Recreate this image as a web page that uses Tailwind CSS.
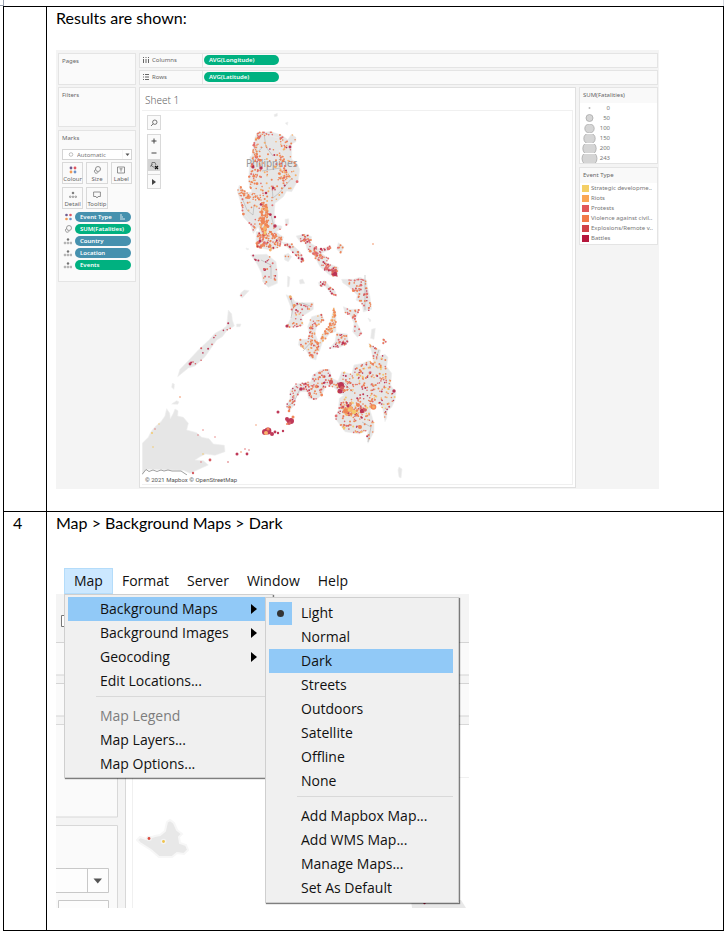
<!DOCTYPE html>
<html lang="en">
<head>
<meta charset="utf-8">
<title>Background maps</title>
<script src="https://cdn.jsdelivr.net/npm/@tailwindcss/browser@4"></script>
</head>
<body class="bg-white text-black font-['Lato',sans-serif]">
<div class="flex justify-between pr-[3px]" aria-hidden="true">
  <div class="w-[4px] h-[6px] border-r border-b border-gray-400"></div>
  <div class="w-[2px] h-[6px] border-l border-gray-300"></div>
</div>
<main class="pl-[3px] pr-[4px]">
<table class="w-full table-fixed border-separate border-spacing-0 border-t border-l border-black text-[16px] leading-[22px]">
<colgroup><col class="w-[43px]"><col></colgroup>
<tbody>
<tr class="align-top">
  <td class="border-r border-b border-black"></td>
  <td class="border-r border-b border-black pl-[9px] pb-[22px]">
    <p>Results are shown:</p>
    <section class="mt-[21px] w-full max-w-[603px] bg-[#f4f4f4] px-[2px] pt-[3px] pb-px pr-[1px] flex gap-[3px] font-['Noto_Sans',sans-serif] text-[6px] leading-[8px] text-[#666]" aria-label="Worksheet">
      <div class="w-[78px] shrink-0 flex flex-col gap-[2px]">
        <div class="h-[32px] border border-[#e4e4e4] bg-[#fafafa] px-[3px] py-[3px]">Pages</div>
        <div class="h-[40px] border border-[#e4e4e4] bg-[#fafafa] px-[3px] py-[3px]">Filters</div>
        <div class="mt-[1px] border border-[#e4e4e4] bg-[#fafafa] px-[3px] pt-[3px] pb-[11px]">
          <label for="mk" class="block">Marks</label>
          <div class="relative mt-[7px]">
            <select id="mk" class="block w-full h-[11px] appearance-none border border-[#d4d4d4] bg-white pl-[14px] text-[6px] leading-[8px] text-[#777]"><option>Automatic</option></select>
            <svg class="absolute inset-0 w-full h-full pointer-events-none" viewBox="0 0 70 11" aria-hidden="true"><circle cx="9" cy="5.5" r="1.8" fill="none" stroke="#999" stroke-width=".6"/><path d="M60.500 1V10" stroke="#eee" stroke-width=".6"/><path d="M63.500 4.500h4l-2 2.500z" fill="#555"/></svg>
          </div>
          <div class="mt-[2px] grid grid-cols-3 gap-x-[3px] gap-y-[3px]">
            <button class="h-[22px] border border-[#d9d9d9] flex flex-col items-center justify-between pt-[3px]"><svg width="8" height="8" viewBox="0 0 8 8"><circle cx="2" cy="2" r="1.400" fill="#6f5a8e"/><circle cx="6" cy="2" r="1.400" fill="#e05560"/><circle cx="2" cy="6" r="1.400" fill="#f29a55"/><circle cx="6" cy="6" r="1.400" fill="#6d93c9"/></svg>Colour</button>
            <button class="h-[22px] border border-[#d9d9d9] flex flex-col items-center justify-between pt-[3px]"><svg width="8" height="8" viewBox="0 0 8 8" fill="none" stroke="#777" stroke-width=".8"><circle cx="5" cy="3" r="2.500"/><path d="M2.500 3.500A2 2 0 1 0 5.200 6.200"/></svg>Size</button>
            <button class="h-[22px] border border-[#d9d9d9] flex flex-col items-center justify-between pt-[3px]"><svg width="8" height="8" viewBox="0 0 8 8" fill="none" stroke="#777" stroke-width=".8"><path d="M.5 1h7v6h-7zM2.500 2.800h3M4 2.800v2.800"/></svg>Label</button>
            <button class="h-[22px] border border-[#d9d9d9] flex flex-col items-center justify-between pt-[3px]"><svg width="8" height="8" viewBox="0 0 8 8" fill="none" stroke="#777" stroke-width=".7"><circle cx="4" cy="2" r=".9" fill="#555"/><circle cx="1.200" cy="5.800" r=".8"/><circle cx="4" cy="5.800" r=".8"/><circle cx="6.800" cy="5.800" r=".8"/></svg>Detail</button>
            <button class="h-[22px] border border-[#d9d9d9] flex flex-col items-center justify-between pt-[3px]"><svg width="8" height="8" viewBox="0 0 8 8" fill="none" stroke="#777" stroke-width=".8"><path d="M.6 1h6.800v4.500H5L4 7 3 5.500H.6z"/></svg>Tooltip</button>
          </div>
          <ul class="mt-[3px] flex flex-col gap-[2px] font-semibold text-white">
            <li class="flex items-center gap-[3px]"><svg class="w-[10px] h-[8px] shrink-0" viewBox="0 0 10 8"><circle cx="4.500" cy="2" r="1.300" fill="#6f5a8e"/><circle cx="8.500" cy="2" r="1.300" fill="#e05560"/><circle cx="4.500" cy="6" r="1.300" fill="#f29a55"/><circle cx="8.500" cy="6" r="1.300" fill="#6d93c9"/></svg><button class="w-[56px] h-[10px] rounded-full bg-[#4691ae] px-[5px] flex items-center justify-between">Event Type<svg width="7" height="6" viewBox="0 0 7 6" fill="none" stroke="#fff" stroke-width=".8"><path d="M1 1h2M1 3h3M1 5h5"/></svg></button></li>
            <li class="flex items-center gap-[3px]"><svg class="w-[10px] h-[8px] shrink-0" viewBox="0 0 10 8" fill="none" stroke="#777" stroke-width=".7"><circle cx="7" cy="3" r="2.500"/><path d="M4.500 3.500A2 2 0 1 0 7.200 6.200"/></svg><button class="w-[56px] h-[10px] rounded-full bg-[#00b180] px-[5px] text-left">SUM(Fatalities)</button></li>
            <li class="flex items-center gap-[3px]"><svg class="w-[10px] h-[8px] shrink-0" viewBox="0 0 10 8" fill="none" stroke="#777" stroke-width=".6"><circle cx="6" cy="2.500" r=".9" fill="#555"/><circle cx="3" cy="6" r=".9"/><circle cx="6" cy="6" r=".9"/><circle cx="9" cy="6" r=".9"/></svg><button class="w-[56px] h-[10px] rounded-full bg-[#4691ae] px-[5px] text-left">Country</button></li>
            <li class="flex items-center gap-[3px]"><svg class="w-[10px] h-[8px] shrink-0" viewBox="0 0 10 8" fill="none" stroke="#777" stroke-width=".6"><circle cx="6" cy="2.500" r=".9" fill="#555"/><circle cx="3" cy="6" r=".9"/><circle cx="6" cy="6" r=".9"/><circle cx="9" cy="6" r=".9"/></svg><button class="w-[56px] h-[10px] rounded-full bg-[#4691ae] px-[5px] text-left">Location</button></li>
            <li class="flex items-center gap-[3px]"><svg class="w-[10px] h-[8px] shrink-0" viewBox="0 0 10 8" fill="none" stroke="#777" stroke-width=".6"><circle cx="6" cy="2.500" r=".9" fill="#555"/><circle cx="3" cy="6" r=".9"/><circle cx="6" cy="6" r=".9"/><circle cx="9" cy="6" r=".9"/></svg><button class="w-[56px] h-[10px] rounded-full bg-[#00b180] px-[5px] text-left">Events</button></li>
          </ul>
        </div>
      </div>
      <div class="flex-1 min-w-0 flex flex-col gap-[2px]">
        <div class="h-[15px] border border-[#e4e4e4] bg-[#fafafa] flex items-start">
          <div class="w-[63px] h-full border-r border-[#e4e4e4] pl-[3px] pb-[1px] flex items-center gap-[3px]"><svg width="6" height="6" viewBox="0 0 6 6" fill="#666"><path d="M0 0h1v1H0zM0 2h1v4H0zM2.500 0h1v1h-1zM2.500 2h1v4h-1zM5 0h1v1H5zM5 2h1v4H5z"/></svg>Columns</div>
          <button class="ml-[1px] mt-[1px] w-[75px] h-[10px] rounded-full bg-[#00b180] text-white font-semibold text-left pl-[5px]">AVG(Longitude)</button>
        </div>
        <div class="h-[15px] border border-[#e4e4e4] bg-[#fafafa] flex items-start">
          <div class="w-[63px] h-full border-r border-[#e4e4e4] pl-[3px] pb-[1px] flex items-center gap-[3px]"><svg width="6" height="6" viewBox="0 0 6 6" fill="#666"><path d="M0 0h1v1H0zM2 0h4v1H2zM0 2.500h1v1H0zM2 2.500h4v1H2zM0 5h1v1H0zM2 5h4v1H2z"/></svg>Rows</div>
          <button class="ml-[1px] mt-[1px] w-[75px] h-[10px] rounded-full bg-[#00b180] text-white font-semibold text-left pl-[5px]">AVG(Latitude)</button>
        </div>
        <div class="flex items-start gap-[3px]">
          <section class="flex-1 min-w-0 border border-[#e0e0e0] bg-white px-[2px] pb-[2px]">
            <h2 class="h-[22px] pl-[3px] pt-[4px] text-[10px] leading-[16px] text-[#666] font-light">Sheet 1</h2>
            <div class="relative border-t border-r border-b border-[#f0f0f0]">
              <svg id="map" class="block w-full" viewBox="142 111 430 373" role="img" aria-label="Map of events in the Philippines"></svg>
              <button class="absolute left-[5px] top-[4px] w-[14px] h-[15px] border border-[#d9d9d9] bg-[#fafafa] flex items-center justify-center" aria-label="Search"><svg width="8" height="8" viewBox="0 0 8 8" fill="none" stroke="#555" stroke-width=".8"><circle cx="4.800" cy="3.200" r="2.200"/><path d="M3.200 4.800 1 7"/></svg></button>
              <div class="absolute left-[5px] top-[23px] w-[14px] border border-[#d9d9d9] bg-[#fafafa] flex flex-col">
                <button class="h-[12px] flex items-center justify-center" aria-label="Zoom in"><svg width="6" height="6" viewBox="0 0 6 6" stroke="#444" stroke-width="1"><path d="M.5 3h5M3 .5v5"/></svg></button>
                <button class="h-[12px] flex items-center justify-center" aria-label="Zoom out"><svg width="6" height="6" viewBox="0 0 6 6" stroke="#444" stroke-width="1"><path d="M.5 3h5"/></svg></button>
                <button class="h-[12px] bg-[#d4d4d4] flex items-center justify-center" aria-label="Reset view"><svg width="10" height="10" viewBox="0 0 10 10" fill="none" stroke="#555" stroke-width=".7"><path d="M1 6.500l2.500-2M3 2.500h3l1 2.500M3 2.500l-.5 3.500 3 1.500"/><path d="M6 6l3 3M9 6 6 9" stroke="#111" stroke-width="1.200"/></svg></button>
                <button class="mt-[3px] h-[14px] border-t border-[#d9d9d9] flex items-center justify-center" aria-label="More tools"><svg width="4" height="6" viewBox="0 0 4 6"><path d="M0 0l4 3-4 3z" fill="#444"/></svg></button>
              </div>
            </div>
          </section>
          <aside class="w-[79px] shrink-0 flex flex-col gap-[3px]">
            <section class="border border-[#e4e4e4] bg-white">
              <h3 class="h-[15px] bg-[#f9f9f9] pl-[3px] pt-[3px]">SUM(Fatalities)</h3>
              <ul class="text-[#777]">
                <li class="h-[10px] flex items-center"><svg class="w-[19px] h-[10px]" viewBox="0 0 19 10"><circle cx="9.500" cy="5" r="1" fill="#bbb"/></svg><span class="w-[11px] text-right">0</span></li>
                <li class="h-[10px] flex items-center"><svg class="w-[19px] h-[10px]" viewBox="0 0 19 10"><circle cx="9.500" cy="5" r="3.500" fill="#d5d5d5" stroke="#aaa" stroke-width=".8"/></svg><span class="w-[11px] text-right">50</span></li>
                <li class="h-[10px] flex items-center"><svg class="w-[19px] h-[9px]" viewBox="0 .5 19 9"><circle cx="9.500" cy="5" r="4.700" fill="#d5d5d5" stroke="#aaa" stroke-width=".8"/></svg><span class="w-[11px] text-right">100</span></li>
                <li class="h-[10px] flex items-center"><svg class="w-[19px] h-[9px]" viewBox="0 .5 19 9"><circle cx="9.500" cy="5" r="5.700" fill="#d5d5d5" stroke="#aaa" stroke-width=".8"/></svg><span class="w-[11px] text-right">150</span></li>
                <li class="h-[10px] flex items-center"><svg class="w-[19px] h-[9px]" viewBox="0 .5 19 9"><circle cx="9.500" cy="5" r="6.700" fill="#d5d5d5" stroke="#aaa" stroke-width=".8"/></svg><span class="w-[11px] text-right">200</span></li>
                <li class="h-[10px] flex items-center"><svg class="w-[19px] h-[9px]" viewBox="0 .5 19 9"><circle cx="9.500" cy="5" r="7.500" fill="#d5d5d5" stroke="#aaa" stroke-width=".8"/></svg><span class="w-[11px] text-right">243</span></li>
              </ul>
            </section>
            <section class="border border-[#e4e4e4] bg-white">
              <h3 class="h-[15px] bg-[#f9f9f9] pl-[3px] pt-[3px]">Event Type</h3>
              <ul class="pl-[2px] pb-[1px] text-[#777] whitespace-nowrap">
                <li class="h-[10px] flex items-center gap-[2px]"><span class="size-[7px] bg-[#f4cf65]"></span>Strategic developme..</li>
                <li class="h-[10px] flex items-center gap-[2px]"><span class="size-[7px] bg-[#faa654]"></span>Riots</li>
                <li class="h-[10px] flex items-center gap-[2px]"><span class="size-[7px] bg-[#e15759]"></span>Protests</li>
                <li class="h-[10px] flex items-center gap-[2px]"><span class="size-[7px] bg-[#f27a48]"></span>Violence against civil..</li>
                <li class="h-[10px] flex items-center gap-[2px]"><span class="size-[7px] bg-[#d04248]"></span>Explosions/Remote v..</li>
                <li class="h-[10px] flex items-center gap-[2px]"><span class="size-[7px] bg-[#b5173c]"></span>Battles</li>
              </ul>
            </section>
          </aside>
        </div>
      </div>
    </section>
  </td>
</tr>
<tr class="align-top">
  <td class="border-r border-b border-black pl-[9px]">4</td>
  <td class="border-r border-b border-black pl-[9px] pb-[22px]">
    <p>Map &gt; Background Maps &gt; Dark</p>
    <section class="mt-[34px] w-full max-w-[413px] font-['Open_Sans',sans-serif] text-[14px] leading-[24px] text-[#111]" aria-label="Map menu">
      <div class="flex pl-[8px] h-[26px]" role="menubar">
        <button class="px-[9px] bg-[#cce8ff] border border-[#b4dcfa]" role="menuitem" aria-expanded="true">Map</button>
        <button class="px-[9px]" role="menuitem">Format</button>
        <button class="px-[9px]" role="menuitem">Server</button>
        <button class="px-[9px]" role="menuitem">Window</button>
        <button class="px-[9px]" role="menuitem">Help</button>
      </div>
      <div class="relative">
        <svg class="block w-full" viewBox="56 595 413 314" aria-hidden="true">
          <path fill="#f4f4f4" d="M56 595h413v314H56z"/>
          <path fill="#fafafa" stroke="#d4d4d4" d="M50 643.500h480v32.500H50zM50 684.500h480v32.500H50z"/>
          <path fill="#fafafa" stroke="#d8d8d8" d="M50 725.500h67.500v92.500H50zM50 826.500h67.500V920H50z"/>
          <path fill="#fff" stroke="#d8d8d8" d="M125.500 725.500H480V920H125.500z"/>
          <path fill="none" stroke="#f0f0f0" d="M132.500 920V778.500H480"/>
          <path fill="#fff" stroke="#777" d="M70 616.500h-8.500v11H70"/>
          <path fill="#fdfdfd" stroke="#c8c8c8" d="M50 869.500h58.500v24H50zM87.500 869.500v24M58.500 901.500h50V920h-50z"/>
          <path fill="#555" d="M93.500 879.500h8.500l-4.250 5z"/>
          <path fill="#e8e8e8" stroke="#f7f7f7" stroke-width="2" d="M137 841l3-3 6 2 9-3 5-1 5-4 2-9 3-2 4 3 3 7 5 4-3 3 1 6 6 2 2 5-4 4-7-1-5 4h-13l-8-7-11-7z"/>
          <circle cx="149" cy="839.500" r="2.800" fill="#f3f3f3"/><circle cx="149" cy="839.500" r="1.400" fill="#dc4b3e"/>
          <circle cx="163.500" cy="842.500" r="2.800" fill="#f3f3f3"/><circle cx="163.500" cy="842.500" r="1.400" fill="#f0c34c"/>
          <path fill="#e8e8e8" d="M412 909l-1-8h50l5 8z"/><circle cx="424.500" cy="904" r="1.200" fill="#b5173c"/>
        </svg>
        <div role="menu" aria-label="Map" class="absolute left-[8px] top-0 w-[209px] border border-[#cfcfcf] bg-[#f0f0f0] p-[2px] pb-px pl-[3px] shadow-[1px_1px_1px_rgba(0,0,0,0.5)] flex flex-col">
          <button role="menuitem" class="h-[24px] bg-[#91c9f7] pl-[32px] pr-[13px] flex items-center justify-between">Background Maps<svg width="6" height="10" viewBox="0 0 6 10"><path d="M0 0l6 5-6 5z"/></svg></button>
          <button role="menuitem" class="h-[24px] pl-[32px] pr-[13px] flex items-center justify-between">Background Images<svg width="6" height="10" viewBox="0 0 6 10"><path d="M0 0l6 5-6 5z"/></svg></button>
          <button role="menuitem" class="h-[24px] pl-[32px] pr-[13px] flex items-center justify-between">Geocoding<svg width="6" height="10" viewBox="0 0 6 10"><path d="M0 0l6 5-6 5z"/></svg></button>
          <button role="menuitem" class="h-[24px] pl-[32px] text-left">Edit Locations...</button>
          <hr class="ml-[28px] mt-[3px] mb-[7px] border-[#d9d9d9]">
          <button role="menuitem" disabled class="h-[24px] pl-[32px] text-left text-[#7d7d7d]">Map Legend</button>
          <button role="menuitem" class="h-[24px] pl-[32px] text-left">Map Layers...</button>
          <button role="menuitem" class="h-[24px] pl-[32px] text-left">Map Options...</button>
        </div>
        <div role="menu" aria-label="Background Maps" class="absolute left-[209px] top-[3px] w-[194px] border border-[#cfcfcf] bg-[#f0f0f0] px-[3px] pt-[3px] pb-[2px] pr-[5px] shadow-[1px_1px_1px_rgba(0,0,0,0.5)] flex flex-col">
          <button role="menuitemradio" aria-checked="true" class="h-[24px] flex items-center gap-[9px]"><span class="w-[23px] h-[23px] bg-[#91c9f7] flex items-center justify-center"><span class="size-[7px] rounded-full bg-[#333]"></span></span>Light</button>
          <button role="menuitemradio" aria-checked="false" class="h-[24px] pl-[32px] text-left">Normal</button>
          <button role="menuitemradio" aria-checked="false" class="h-[24px] pl-[32px] text-left bg-[#91c9f7]">Dark</button>
          <button role="menuitemradio" aria-checked="false" class="h-[24px] pl-[32px] text-left">Streets</button>
          <button role="menuitemradio" aria-checked="false" class="h-[24px] pl-[32px] text-left">Outdoors</button>
          <button role="menuitemradio" aria-checked="false" class="h-[24px] pl-[32px] text-left">Satellite</button>
          <button role="menuitemradio" aria-checked="false" class="h-[24px] pl-[32px] text-left">Offline</button>
          <button role="menuitemradio" aria-checked="false" class="h-[24px] pl-[32px] text-left">None</button>
          <hr class="ml-[28px] mt-[3px] mb-[7px] border-[#d9d9d9]">
          <button role="menuitem" class="h-[24px] pl-[32px] text-left">Add Mapbox Map...</button>
          <button role="menuitem" class="h-[24px] pl-[32px] text-left">Add WMS Map...</button>
          <button role="menuitem" class="h-[24px] pl-[32px] text-left">Manage Maps...</button>
          <button role="menuitem" class="h-[24px] pl-[32px] text-left">Set As Default</button>
        </div>
      </div>
    </section>
  </td>
</tr>
</tbody>
</table>
</main>
<script>
// Islands: origin, outline in thirds of a map unit, number of events, palette.
const C = {y:'#f5c45a', r:'#faa654', o:'#f0743e', p:'#e15759', e:'#d04248', b:'#b5173c'};
const A = [220,100], B = [270,270], D = [135,290];
const land = [
 [A,'112,98 130,100 150,95 180,105 203,120 214,103 228,112 228,125 215,132 215,178 232,192 239,208 235,240 215,275 200,273 190,290 165,310 163,340 165,375 185,378 186,385 168,395 190,412 180,440 150,452 130,435 110,442 108,415 122,405 115,380 100,400 92,375 70,350 60,300 52,275 58,255 64,268 75,280 95,275 86,245 92,215 97,160 105,120',150,'ooooprrb'],
 [A,'105,112 112,98 150,95 185,105 205,120 210,128 180,128 180,115 135,103 115,115 115,170 95,170',45,'oopo'],
 [A,'90,170 120,165 130,205 120,215 105,260 90,268 86,240',38,'ooop'],
 [A,'178,150 195,170 195,205 212,230 190,245 172,240 182,200',48,'ooopr'],
 [A,'60,258 80,278 125,280 125,300 85,300 58,275',38,'ooo'],
 [A,'58,275 66,275 72,340 95,370 105,385 100,400 92,375 70,350',16,'oop'],
 [A,'122,305 140,310 145,350 140,400 128,400 112,360 125,345',120,'ooooor'],
 [A,'108,395 150,395 190,410 180,440 150,450 110,442',110,'ooooobp'],
 [A,'228,408 255,402 275,410 272,430 290,440 300,450 330,437 332,447 305,460 325,475 318,488 355,502 352,530 330,526 300,500 283,468 262,450 255,425 240,425',110,'opeoppob'],
 [A,'183,425 215,432 240,455 253,482 244,486 228,468 205,445',24,'epbo'],
 [A,'355,428 372,440 364,460 350,448',6,'op'],
 [A,'92,465 140,463 168,485 173,525 172,550 145,562 128,545 125,520 110,490',24,'opb'],
 [A,'192,465 205,460 215,470 205,485 194,480',2,'o'],
 [A,'162,44 172,40 172,48 164,50',0,''],[A,'196,69 204,66 202,76',0,''],[A,'195,358 206,356 206,372 197,378',1,'p'],
 [B,'145,38 165,32 178,48 195,62 200,80 180,68 165,48 148,48',22,'oepb'],
 [B,'175,0 195,0 202,15 190,20',10,'beo'],
 [B,'215,28 250,28 270,22 290,30 292,50 300,80 305,118 280,126 276,100 258,90 262,75 235,50 218,38',52,'peopob'],
 [B,'220,110 240,118 268,118 256,150 277,190 262,202 248,185 252,160 240,135 225,130',28,'opp'],
 [B,'48,74 65,80 75,95 95,98 130,98 130,118 95,140 100,165 78,172 48,172 65,140 62,110',42,'opbpr'],
 [B,'125,140 155,132 162,150 140,170 135,190 148,225 138,270 122,265 108,240 85,225 88,208 112,208 118,190 113,170',80,'oopero'],
 [B,'192,112 198,130 198,185 180,190 158,215 148,245 140,240 155,195 178,165',60,'oor'],
 [B,'200,188 232,192 235,218 210,232 178,236 195,215',30,'oopb'],
 [B,'305,178 316,175 312,208 302,205',0,''],[B,'88,30 98,27 104,40 90,42',0,''],[B,'53,18 60,22 57,50 52,50',0,''],
 [B,'296,220 318,235 332,240 328,258 345,253 354,262 350,290 365,310 362,345 378,368 375,390 365,412 352,422 350,445 345,455 338,415 325,400 300,420 312,460 312,485 294,520 290,500 295,480 268,492 225,485 195,445 205,420 208,385 222,375 205,370 200,345 215,305 245,312 252,285 278,280 295,272 310,278 305,245',330,'oppeobooyr'],
 [B,'150,300 178,298 186,325 208,335 212,368 190,352 170,345 155,375 138,390 115,385 112,365 92,365 78,380 74,405 58,422 48,408 60,385 60,360 78,342 122,335 128,315',115,'opoebp'],
 [B,'210,395 245,395 260,410 290,415 285,435 250,440 215,435',65,'yroboe'],
 [B,'338,205 348,215 340,220',6,'po'],
 [D,'280,60 290,72 292,90 298,108 275,122 262,140 245,150 210,200 180,228 160,234 128,260 135,238 160,212 190,180 222,150 240,130 262,118 275,108',13,'pbe'],
 [D,'305,102 318,102 315,110 305,110',0,''],[D,'112,280 118,282 117,298 110,292',0,''],[D,'125,332 132,336 128,343 110,342',0,''],[D,'318,8 328,0 342,2 322,24 314,18',1,'p'],
 [D,'22,460 40,442 48,425 60,410 78,395 90,378 95,356 104,370 106,386 115,370 120,357 129,362 128,378 145,382 160,400 155,420 185,428 200,442 222,446 235,462 268,466 270,485 240,496 212,492 195,500 180,510 205,512 220,525 200,534 175,545 165,550 145,541 35,538 22,552',0,'']
];
let seed = 77;
const rnd = () => (seed = (seed * 16807) % 2147483647) / 2147483647;
const inside = (x, y, p) => {
  let c = false;
  for (let i = 0, j = p.length - 1; i < p.length; j = i++)
    if ((p[i][1] > y) !== (p[j][1] > y) && x < (p[j][0]-p[i][0])*(y-p[i][1])/(p[j][1]-p[i][1])+p[i][0]) c = !c;
  return c;
};
const dot = (x, y, r, f) => `<circle cx="${x.toFixed(1)}" cy="${y.toFixed(1)}" r="${r.toFixed(1)}" fill="${f}"/>`;
let shapes = '', dots = '';
for (const [o, s, n, mix] of land) {
  const p = s.split(' ').map(q => { const [x, y] = q.split(',').map(Number); return [o[0]+x/3, o[1]+y/3]; });
  shapes += `<polygon points="${p.map(q => q.join()).join(' ')}"/>`;
  const xs = p.map(q => q[0]), ys = p.map(q => q[1]);
  const x0 = Math.min(...xs), x1 = Math.max(...xs), y0 = Math.min(...ys), y1 = Math.max(...ys);
  for (let k = 0; k < n;) {
    const x = x0 + rnd()*(x1-x0), y = y0 + rnd()*(y1-y0);
    if (!inside(x, y, p)) continue;
    const t = rnd();
    dots += dot(x, y, t > .95 ? 1.4 : t > .6 ? 1 : .8, C[mix[Math.floor(rnd()*mix.length)]]);
    k++;
  }
}
// Larger single events: x, y, radius, colour.
const big = [[290,147,1.4,'b'],[275,226,1.7,'b'],[275,217,1.200,'b'],[266,193,1.300,'b'],[273,188,1.200,'b'],[253,167,1.500,'b'],[261,168,1.700,'b'],[260,241,1.500,'b'],[302,259,1.400,'b'],[321,249,1.300,'b'],[335,274,2.300,'b'],[333,271,1.800,'e'],[287,326,1.600,'b'],[265,228,2,'r'],[263,222,2.200,'o'],[265,233,1.500,'y'],
[341,385,3,'b'],[340,391,2.500,'b'],[342,388,2,'e'],[331,382,2.200,'e'],[350,409,3,'r'],[346,411,2.800,'o'],[354,412,2.400,'y'],[348,406,1.500,'b'],[343,407,1.500,'e'],[357,415,1.600,'o'],[351,414,1.500,'o'],[349,410,1.500,'y'],[362,411,2.200,'b'],[358,405,2,'o'],[373.500,407,2.800,'o'],[373.500,407,1.400,'r'],[365,410,1.800,'e'],[360,427,2,'o'],[394,391,1.700,'b'],[301,389,1.800,'b'],[373,244,.8,'o'],
[287,419,2,'b'],[291,421,3,'b'],[289,423,2,'e'],[293,417,1.500,'o'],[288,421,1.600,'b'],[287,424,1,'o'],[265,432,3,'b'],[268,431,3.400,'b'],[266,433,2,'r'],[268,429,1.600,'o'],[272,434,2,'b'],[275,432,1.400,'b'],[278,433,1.200,'b'],[283,431,1.200,'b'],[278,412,1.500,'b'],[289,411,1.300,'o'],[237,454,1.500,'b'],[247,454,1.400,'b'],[241,452,.8,'o'],[245,449,.8,'p'],[249,450,.7,'e'],[190,364,1.400,'b'],[193,362,.8,'e'],[210,460,1.400,'e'],[180,397,.8,'o'],[193,473,1.200,'e'],[215,437,.7,'p'],[203,430,.7,'p'],[198,435,.7,'p'],[203,454,.8,'y'],[201,462,.7,'p'],[228,462,.8,'e'],[256,425,.7,'o'],[152,433,1,'y'],[155,429,.7,'p'],[159,424,.7,'y'],[153,447,.8,'y']];
for (const [x, y, r, c] of big) dots += dot(x, y, r, C[c]);
document.getElementById('map').innerHTML =
  `<g fill="#e6e6e6" stroke="#efefef" stroke-width=".6" stroke-linejoin="round">${shapes}<path d="M399 467l3 2-1 9-2-1-1-7zM368 318l3 2-1 2zM246 248l3 1-2 1z"/></g>
  <g fill="none" stroke="#b0b0b0" stroke-width=".6"><path d="M264 134l2 13 7 9M254 155l9-8M262 171l18-3M292 178l-13 15-6 5-1-11M242 198l5 12 6 5 1-10M264 210l7 5 3 12M261 260l10 5v14M290 295l3 12 9-4 8 3M293 308l-2 10M303 351l9-10M288 406l6-4 6-13M365 275v35M343 382l10 10M370 385h7M362 422l9 5-3 15M377 355l2-5"/></g>
  <text x="246" y="167" font-size="10" fill="#999" font-family="Noto Sans, sans-serif">Philippines</text><g opacity=".85">${dots}</g>
  <path d="M142 474.500l4-5 3 2 4-1.500 4 1.500 4-1.500 3 1 4-1 4 1h9l6 4" fill="none" stroke="#888" stroke-width=".8"/>
  <rect x="142" y="475" width="50" height="9" fill="#fff" opacity=".75"/>
  <text x="145" y="481.500" font-size="6" fill="#555" font-family="Roboto, sans-serif">© 2021 Mapbox © OpenStreetMap</text>`;
</script>
</body>
</html>
